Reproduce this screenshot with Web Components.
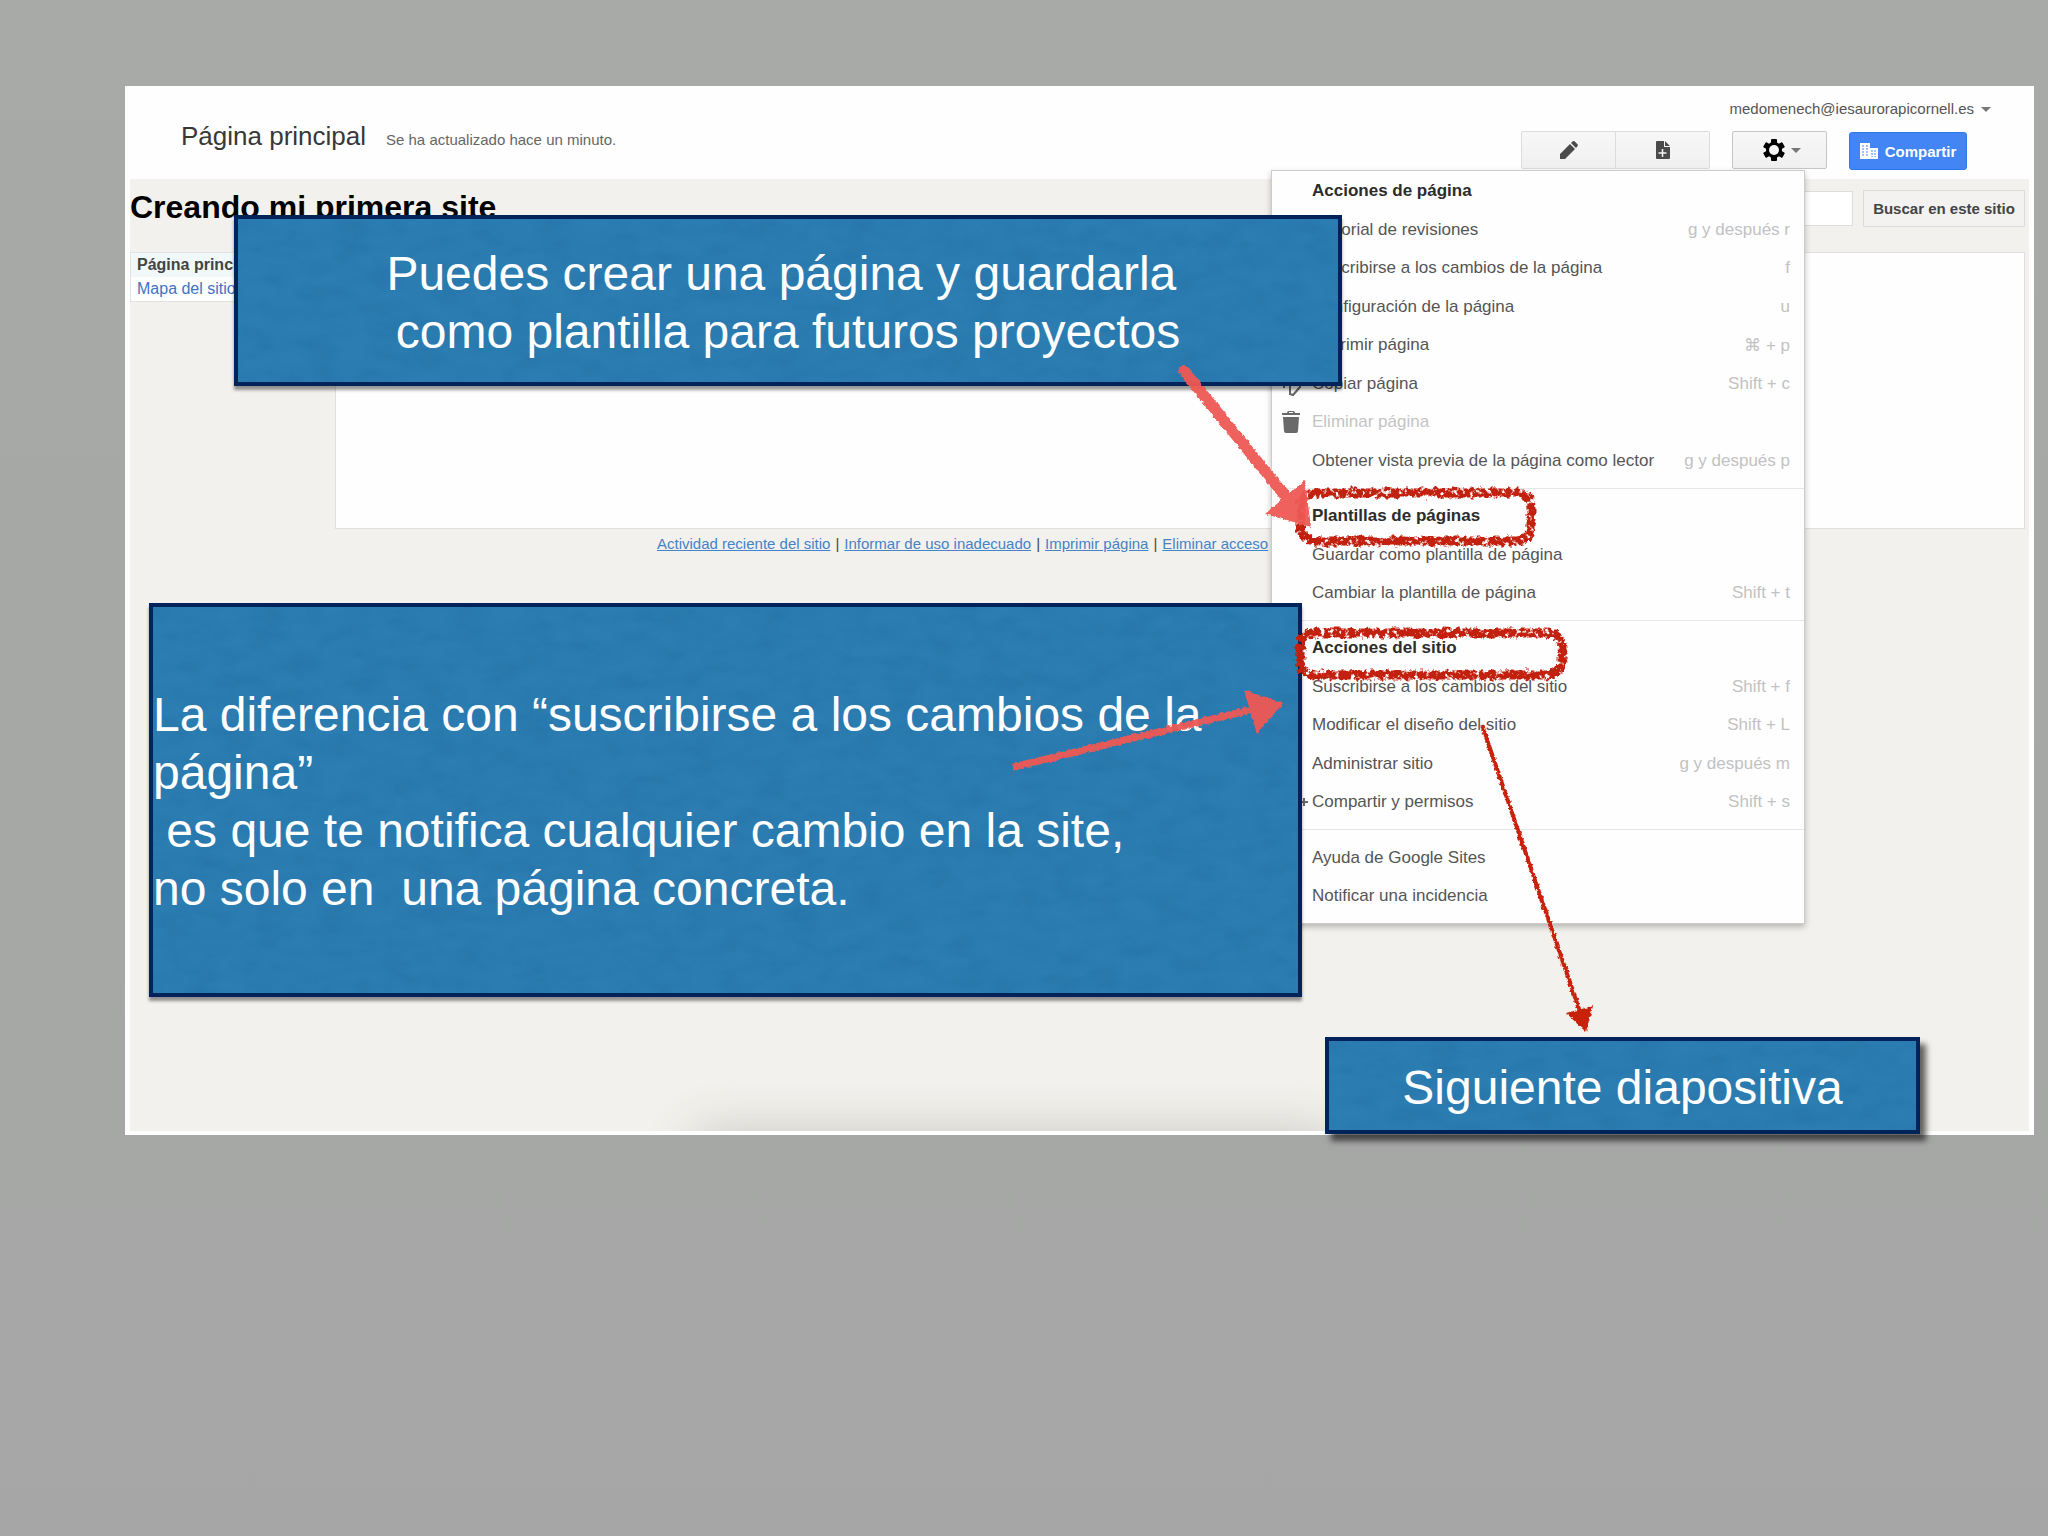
<!DOCTYPE html>
<html lang="es">
<head>
<meta charset="utf-8">
<meta name="viewport" content="width=device-width, initial-scale=1">
<title>Plantillas de páginas</title>
<style>
    body {
        margin: 0;
        background: #a6a8a6;
        font-family: "Liberation Sans", Arial, sans-serif;
    }
</style>
</head>
<body>

<slide-stage>
    <site-page heading="Página principal" updated="Se ha actualizado hace un minuto." account="medomenech@iesaurorapicornell.es">
        <actions-menu slot="menu">
            <menu-group heading="Acciones de página">
                <menu-row keys="g y después r">Historial de revisiones</menu-row>
                <menu-row keys="f">Suscribirse a los cambios de la página</menu-row>
                <menu-row keys="u">Configuración de la página</menu-row>
                <menu-row keys="⌘ + p">Imprimir página</menu-row>
                <menu-row keys="Shift + c" icon="copy">Copiar página</menu-row>
                <menu-row icon="trash" disabled>Eliminar página</menu-row>
                <menu-row keys="g y después p">Obtener vista previa de la página como lector</menu-row>
            </menu-group>
            <menu-group heading="Plantillas de páginas">
                <menu-row>Guardar como plantilla de página</menu-row>
                <menu-row keys="Shift + t">Cambiar la plantilla de página</menu-row>
            </menu-group>
            <menu-group heading="Acciones del sitio">
                <menu-row keys="Shift + f">Suscribirse a los cambios del sitio</menu-row>
                <menu-row keys="Shift + L">Modificar el diseño del sitio</menu-row>
                <menu-row keys="g y después m">Administrar sitio</menu-row>
                <menu-row keys="Shift + s" icon="person">Compartir y permisos</menu-row>
            </menu-group>
            <menu-group>
                <menu-row>Ayuda de Google Sites</menu-row>
                <menu-row>Notificar una incidencia</menu-row>
            </menu-group>
        </actions-menu>
    </site-page>

    <note-callout slot="note" class="save">Puedes crear una página y guardarla&nbsp;
como plantilla para futuros proyectos</note-callout>
    <note-callout slot="note" class="subscribe" align="left">La diferencia con “suscribirse a los cambios de la página”
 es que te notifica cualquier cambio en la site,
no solo en  una página concreta.</note-callout>
    <note-callout slot="note" class="next" raised>Siguiente diapositiva</note-callout>
    <sketch-marks slot="note"></sketch-marks>
</slide-stage>

<script>
const ICONS = {
    pencil: `<svg width="18" height="18" viewBox="0 0 18 18"><path fill="#4a4a4a" d="M0 18v-5L10 3l5 5L5 18zM11 2l1.500-1.400q1-.9 2-.3l3 3q.8 1-.1 2L16 7z"/></svg>`,
    page: `<svg width="14" height="18" viewBox="0 0 14 18"><path fill="#4a4a4a" d="M0 1q0-1 1-1h7v6h6v11q0 1-1 1H1q-1 0-1-1zM9 0l5 5H9z"/><path stroke="#f5f5f5" stroke-width="1.500" d="M2.500 12h8M6.500 8v8"/></svg>`,
    gear: `<svg width="22" height="24" viewBox="-11 -12 22 24"><g fill="#000"><rect x="-3" y="-11" width="6" height="22" rx="1"/><rect x="-3" y="-11" width="6" height="22" rx="1" transform="rotate(60)"/><rect x="-3" y="-11" width="6" height="22" rx="1" transform="rotate(120)"/><circle r="8"/></g><circle r="5" fill="#f5f5f5"/></svg>`,
    building: `<svg width="18" height="16" viewBox="0 0 18 16"><path fill="#fff" d="M0 0h10v5h8v11H0z"/><path stroke="#4385f5" stroke-width="1" stroke-dasharray="2 1" d="M3 2v12M7 2v12M12 7v7M15 7v7"/></svg>`,
    copy: `<svg width="20" height="26" viewBox="0 0 20 26"><path fill="none" stroke="#666" stroke-width="2" d="M2 17V2h10M7 6h11v10l-7 8-3-1V10"/></svg>`,
    trash: `<svg width="18" height="22" viewBox="0 0 18 22"><path fill="#6a6a6a" d="M0 2h5q0-2 2-2h4q2 0 2 2h5v2H0zM1 6h16l-1 14q0 2-2 2H4q-2 0-2-2z"/><path fill="#fff" d="M7 1h4v1H7z"/></svg>`,
    person: `<svg width="26" height="18" viewBox="0 0 26 18"><path fill="#666" d="M9 1a4 4 0 1 1 0 8 4 4 0 0 1 0-8M0 17q0-6 9-6t9 6zM18 8h3V5h2v3h3v2h-3v3h-2v-3h-3z"/></svg>`
}

class SlideStage extends HTMLElement {
    constructor() {
        super()
        this.attachShadow({mode: "open"}).innerHTML = `
            <style>
                :host {
                    display: block;
                    position: relative;
                    box-sizing: border-box;
                    min-height: 100vh;
                    padding: 86px 14px 0 125px;
                    background: linear-gradient(#a7aaa7, #a5a6a5);
                    overflow: hidden;
                }
                ::slotted(.save) { left: 234px; top: 215px; width: 1108px; height: 171px; }
                ::slotted(.subscribe) { left: 149px; top: 603px; width: 1153px; height: 394px; }
                ::slotted(.next) { left: 1325px; top: 1037px; width: 595px; height: 97px; }
            </style>
            <slot></slot>
            <slot name="note"></slot>
        `
    }
}

class SitePage extends HTMLElement {
    connectedCallback() {
        this.attachShadow({mode: "open"}).innerHTML = `
            <style>
                :host {
                    display: flex;
                    flex-direction: column;
                    position: relative;
                    box-sizing: border-box;
                    min-height: 1049px;
                    padding: 0 5px 4px;
                    background: #fefefe;
                    color: #444;
                    font-size: 15px;
                }
                header {
                    display: flex;
                    justify-content: space-between;
                    align-items: flex-start;
                    height: 93px;
                }
                .where { display: flex; align-items: baseline; gap: 20px; padding: 35px 0 0 51px; }
                h1 { margin: 0; font-size: 26px; line-height: 30px; font-weight: normal; color: #383838; }
                .updated { color: #666; }
                .account {
                    display: flex;
                    align-items: center;
                    justify-content: flex-end;
                    gap: 7px;
                    padding: 14px 38px 13px 0;
                    line-height: 18px;
                    color: #555;
                }
                .caret { border: 5px solid transparent; border-top-color: #777; border-bottom: 0; }
                .tools { display: flex; align-items: flex-start; justify-content: flex-end; gap: 22px; padding-right: 62px; }
                .pair { display: flex; }
                button {
                    display: flex;
                    align-items: center;
                    justify-content: center;
                    box-sizing: border-box;
                    height: 38px;
                    padding: 0;
                    border: 1px solid #dcdcdc;
                    background: linear-gradient(#f7f7f7, #f0f0f0);
                    font: bold 15px "Liberation Sans", Arial, sans-serif;
                    color: #444;
                }
                .pair button { width: 95px; border-radius: 2px 0 0 2px; }
                .pair button + button { margin-left: -1px; border-radius: 0 2px 2px 0; }
                .gear { width: 95px; gap: 6px; padding-left: 4px; border-color: #c6c6c6; border-radius: 2px; }
                .share {
                    width: 118px;
                    gap: 7px;
                    margin-top: 1px;
                    border-color: #3079ed;
                    border-radius: 3px;
                    background: #4385f5;
                    color: #fff;
                }
                main {
                    flex: 1;
                    position: relative;
                    overflow: hidden;
                    padding: 11px 4px 0 0;
                    background: #f3f1ed;
                }
                main::after {
                    content: "";
                    position: absolute;
                    left: 565px;
                    top: 100%;
                    width: 640px;
                    height: 60px;
                    box-shadow: 0 0 50px #c8c7c3;
                }
                .bar { display: flex; justify-content: space-between; align-items: flex-start; height: 37px; }
                h2 { margin: 0; font-size: 32px; line-height: 34px; color: #000; }
                form { display: flex; align-items: center; gap: 10px; }
                input {
                    box-sizing: border-box;
                    width: 240px;
                    height: 35px;
                    border: 1px solid #ddd;
                    background: #fff;
                }
                form button { width: 162px; height: 37px; background: #f3f2f0; }
                .columns {
                    display: grid;
                    grid-template-columns: 195px 1fr;
                    gap: 10px;
                    align-items: start;
                    padding-top: 25px;
                }
                nav { border: 1px solid #e2e2e2; background: #fdfefe; font-size: 16px; line-height: 24px; }
                nav a { display: block; padding-left: 6px; color: #4272c4; text-decoration: none; }
                nav a.here { font-weight: bold; color: #444; background: #f0f8fa; }
                article { height: 275px; border: 1px solid #dfdfdc; background: #fefefe; }
                footer { display: flex; gap: 5px; padding: 5px 0 0 527px; line-height: 20px; white-space: nowrap; }
                footer a { color: #4583c8; text-decoration: underline; }
                ::slotted(actions-menu) { position: absolute; top: 84px; right: 229px; }
            </style>
            <header>
                <div class="where">
                    <h1>${this.getAttribute("heading")}</h1>
                    <span class="updated">${this.getAttribute("updated")}</span>
                </div>
                <div>
                    <div class="account">${this.getAttribute("account")}<span class="caret"></span></div>
                    <div class="tools">
                        <div class="pair">
                            <button aria-label="Editar página">${ICONS.pencil}</button>
                            <button aria-label="Nueva página">${ICONS.page}</button>
                        </div>
                        <button class="gear" aria-label="Más acciones">${ICONS.gear}<span class="caret"></span></button>
                        <button class="share">${ICONS.building}Compartir</button>
                    </div>
                </div>
            </header>
            <main>
                <div class="bar">
                    <h2>Creando mi primera site</h2>
                    <form>
                        <input type="text" aria-label="Buscar en este sitio">
                        <button type="button">Buscar en este sitio</button>
                    </form>
                </div>
                <div class="columns">
                    <nav>
                        <a class="here" href="#principal">Página principal</a>
                        <a href="#mapa">Mapa del sitio</a>
                    </nav>
                    <article></article>
                </div>
                <footer>
                    <a href="#actividad">Actividad reciente del sitio</a>|
                    <a href="#informar">Informar de uso inadecuado</a>|
                    <a href="#imprimir">Imprimir página</a>|
                    <a href="#acceso">Eliminar acceso</a>
                </footer>
            </main>
            <slot name="menu"></slot>
        `
    }
}

class ActionsMenu extends HTMLElement {
    constructor() {
        super()
        this.attachShadow({mode: "open"}).innerHTML = `
            <style>
                :host {
                    display: block;
                    box-sizing: border-box;
                    width: 534px;
                    padding: 1px 0 8px;
                    border: 1px solid #ccc;
                    background: #fefefe;
                    box-shadow: 0 3px 6px rgba(0, 0, 0, .25);
                    font-size: 17px;
                    color: #555;
                }
                ::slotted(menu-group:not(:first-child)) {
                    margin-top: 8px;
                    padding-top: 8px;
                    border-top: 1px solid #e6e6e6;
                }
            </style>
            <slot></slot>
        `
    }
}

class MenuGroup extends HTMLElement {
    connectedCallback() {
        const heading = this.getAttribute("heading")
        this.attachShadow({mode: "open"}).innerHTML = `
            <style>
                :host { display: block; }
                h3 { margin: 0; padding-left: 40px; font-size: 17px; line-height: 38px; color: #2c2c2c; }
                ::slotted(menu-row:nth-child(odd)) { height: 39px; }
            </style>
            ${heading ? `<h3>${heading}</h3>` : ""}
            <slot></slot>
        `
    }
}

class MenuRow extends HTMLElement {
    connectedCallback() {
        const disabled = this.hasAttribute("disabled")
        this.attachShadow({mode: "open"}).innerHTML = `
            <style>
                :host { display: block; height: 38px; }
                button {
                    display: flex;
                    align-items: center;
                    width: 100%;
                    height: 100%;
                    padding: 0 14px 0 10px;
                    border: 0;
                    background: none;
                    font: inherit;
                    color: inherit;
                    text-align: left;
                    white-space: nowrap;
                }
                button:disabled { color: #c4c4c4; }
                .icon { display: flex; flex: 0 0 30px; }
                .icon svg { flex: none; }
                .label { flex: 1; }
                .keys { color: #c2c2c2; }
            </style>
            <button ${disabled ? "disabled" : ""}>
                <span class="icon">${ICONS[this.getAttribute("icon")] || ""}</span>
                <span class="label"><slot></slot></span>
                <span class="keys">${this.getAttribute("keys") || ""}</span>
            </button>
        `
    }
}

class NoteCallout extends HTMLElement {
    constructor() {
        super()
        this.attachShadow({mode: "open"}).innerHTML = `
            <style>
                :host {
                    display: flex;
                    position: absolute;
                    align-items: center;
                    justify-content: center;
                    box-sizing: border-box;
                    padding-top: 4px;
                    border: 4px solid #00245a;
                    background: #2c7eb2;
                    box-shadow: 0 4px 3px rgba(0, 0, 0, .4);
                    font-size: 48px;
                    line-height: 58px;
                    text-align: center;
                    color: #fff;
                }
                :host([align="left"]) { justify-content: flex-start; text-align: left; }
                :host([raised]) { box-shadow: 6px 7px 6px rgba(0, 0, 0, .6); }
                .paper { position: absolute; inset: 0; width: 100%; height: 100%; }
                p { position: relative; margin: 0; white-space: pre-wrap; }
            </style>
            <svg class="paper" aria-hidden="true">
                <filter id="paper" x="0" y="0" width="100%" height="100%" color-interpolation-filters="sRGB">
                    <feTurbulence type="fractalNoise" baseFrequency=".03 .06" numOctaves="5" seed="4"/>
                    <feColorMatrix values="0 0 0 0 .1  0 0 0 0 .38  0 0 0 0 .6  .4 0 0 0 -.1"/>
                </filter>
                <rect width="100%" height="100%" filter="url(#paper)"/>
            </svg>
            <p><slot></slot></p>
        `
    }
}

// Crayon frames and arrows drawn over the slide
class SketchMarks extends HTMLElement {
    constructor() {
        super()
        this.attachShadow({mode: "open"}).innerHTML = `
            <style>
                :host { display: block; position: absolute; inset: 0; pointer-events: none; }
                svg { display: block; width: 100%; height: 100%; }
            </style>
            <svg aria-hidden="true">
                <defs>
                    <filter id="crayon" filterUnits="userSpaceOnUse" x="1280" y="470" width="300" height="220" color-interpolation-filters="sRGB">
                        <feTurbulence type="fractalNoise" baseFrequency=".2" numOctaves="3" seed="7" result="grain"/>
                        <feDisplacementMap in="SourceGraphic" in2="grain" scale="8" xChannelSelector="R" yChannelSelector="G" result="rough"/>
                        <feColorMatrix in="grain" values="0 0 0 0 0  0 0 0 0 0  0 0 0 0 0  0 0 6 0 -1.6" result="wax"/>
                        <feComposite in="rough" in2="wax" operator="in"/>
                    </filter>
                    <filter id="thin" filterUnits="userSpaceOnUse" x="980" y="340" width="660" height="720">
                        <feTurbulence type="fractalNoise" baseFrequency=".3" numOctaves="3" seed="3" result="grain"/>
                        <feDisplacementMap in="SourceGraphic" in2="grain" scale="4" xChannelSelector="R" yChannelSelector="G"/>
                    </filter>
                </defs>
                <g filter="url(#crayon)" fill="none" stroke="#c2210f" stroke-width="9">
                    <rect x="1301" y="493" width="230" height="48" rx="14"/>
                    <rect x="1300" y="633" width="262" height="42" rx="14"/>
                </g>
                <g filter="url(#thin)">
                    <g fill="#ee5a53" stroke="#ee5a53" opacity=".95">
                        <path stroke-width="11" stroke-linecap="round" d="M1184 371L1290 502"/>
                        <path stroke="none" d="M1305 480L1265 514 1311 527z"/>
                        <path stroke-width="7" d="M1013 767L1250 710"/>
                        <path stroke="none" d="M1244 690L1283 703 1257 734z"/>
                    </g>
                    <g fill="#c8220b" stroke="#c8220b">
                        <path stroke-width="4" d="M1482 725Q1535 880 1580 1012"/>
                        <path stroke="none" d="M1566 1013L1593 1006 1586 1032z"/>
                    </g>
                </g>
            </svg>
        `
    }
}

customElements.define("slide-stage", SlideStage)
customElements.define("site-page", SitePage)
customElements.define("actions-menu", ActionsMenu)
customElements.define("menu-group", MenuGroup)
customElements.define("menu-row", MenuRow)
customElements.define("note-callout", NoteCallout)
customElements.define("sketch-marks", SketchMarks)
</script>
</body>
</html>
